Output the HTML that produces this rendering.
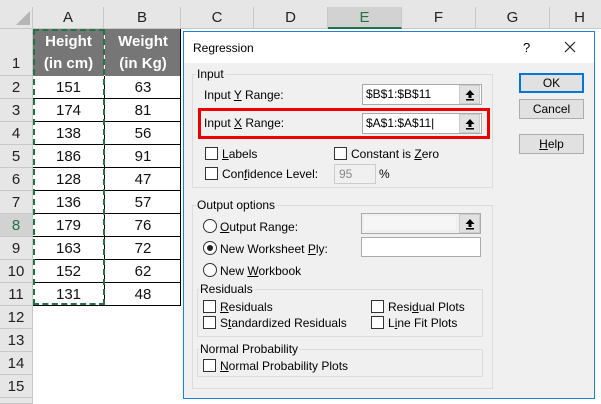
<!DOCTYPE html>
<html style="width:601px;height:404px;overflow:hidden"><head><meta charset="utf-8"><style>
*{margin:0;padding:0;box-sizing:border-box}
body{width:601px;height:404px;overflow:hidden;background:#fff;position:relative;font-family:"Liberation Sans",sans-serif}
.a{position:absolute}
.ch{position:absolute;top:7px;height:22px;background:#e6e6e6;border-right:1px solid #c8c8c8;border-bottom:1px solid #c8c8c8;font-size:15px;text-align:center;line-height:22px;color:#222}
.rh{position:absolute;left:0;width:33px;height:23px;background:#e6e6e6;border-bottom:1px solid #c8c8c8;border-right:1px solid #c8c8c8;font-size:15px;text-align:center;line-height:23px;color:#222}
.c{position:absolute;height:23px;font-size:15px;text-align:center;line-height:23px;color:#111;border-bottom:1px solid #000}
.d{font-size:12px;color:#000;position:absolute;white-space:nowrap}
.cb{position:absolute;width:13px;height:13px;border:1px solid #333;background:#fff}
.rb{position:absolute;width:14px;height:14px;border:1px solid #333;border-radius:50%;background:#fff}
.g{position:absolute;border:1px solid #dcdcdc}
.gl{position:absolute;background:#f0f0f0;padding:0 1px;font-size:12px;top:-8px;left:3px}
.tb{position:absolute;border:1px solid #aaa;background:#fff;font-size:12px;line-height:18px;padding-left:3px}
.btn{position:absolute;width:65px;height:20px;border:1px solid #adadad;background:#e1e1e1;font-size:12px;text-align:center;line-height:18px}
.up{position:absolute;width:21px;background:#e1e1e1;border:1px solid #ccc}
.up svg{position:absolute;left:4px;top:3px}
u{text-decoration:underline}
</style></head><body>
<div class="a" style="left:0;top:0;width:601px;height:7px;background:#e6e6e6"></div>
<div class="a" style="left:0;top:7px;width:33px;height:22px;background:#e6e6e6;border-right:1px solid #c8c8c8;border-bottom:1px solid #c8c8c8"></div>
<div class="a" style="left:16px;top:11px;width:0;height:0;border-left:14px solid transparent;border-bottom:14px solid #b5b5b5"></div>
<div class="ch" style="left:33px;width:71px">A</div>
<div class="ch" style="left:104px;width:77px">B</div>
<div class="ch" style="left:181px;width:73px">C</div>
<div class="ch" style="left:254px;width:74px">D</div>
<div class="ch" style="left:328px;width:74px;background:#d2d2d2;border-bottom:2px solid #217346;color:#217346">E</div>
<div class="ch" style="left:402px;width:74px">F</div>
<div class="ch" style="left:476px;width:74px">G</div>
<div class="ch" style="left:550px;width:60px">H</div>
<div class="rh" style="top:29px;height:47px;line-height:70px">1</div>
<div class="rh" style="top:76px">2</div><div class="rh" style="top:99px">3</div><div class="rh" style="top:122px">4</div><div class="rh" style="top:145px">5</div><div class="rh" style="top:168px">6</div><div class="rh" style="top:191px">7</div><div class="rh" style="top:214px;background:#d2d2d2;color:#217346">8</div><div class="rh" style="top:237px">9</div><div class="rh" style="top:260px">10</div><div class="rh" style="top:283px">11</div><div class="rh" style="top:306px">12</div><div class="rh" style="top:329px">13</div><div class="rh" style="top:352px">14</div><div class="rh" style="top:375px">15</div><div class="rh" style="top:398px;height:6px"></div>
<div class="a" style="left:33px;top:29px;width:148px;height:47px;background:#767676;color:#fff;font-weight:bold;font-size:15px;line-height:22px;padding-top:2px">
<div class="a" style="left:0;width:71px;text-align:center">Height<br>(in cm)</div>
<div class="a" style="left:71px;width:77px;text-align:center;border-left:1px solid #fff;height:47px;top:0;padding-top:2px">Weight<br>(in Kg)</div></div>
<div id="rows"></div>
<div class="a" style="left:180px;top:29px;width:1px;height:277px;background:#000"></div>
<script>
var A=[151,174,138,186,128,136,179,163,152,131],B=[63,81,56,91,47,57,76,72,62,48],h="";
for(var i=0;i<10;i++){var t=76+i*23;h+='<div class="c" style="left:33px;top:'+t+'px;width:71px">'+A[i]+'</div><div class="c" style="left:104px;top:'+t+'px;width:77px;border-left:1px solid #000">'+B[i]+'</div>';}
document.getElementById("rows").outerHTML=h;
</script>
<div class="a" style="left:33px;top:29px;width:72px;height:276px;border:2px dashed #217346"></div>
<!-- dialog -->
<div class="a" style="left:183px;top:31px;width:412px;height:368px;background:#f0f0f0;border:1px solid #1883d7">
<div class="a" style="left:0;top:0;width:410px;height:31px;background:#fff"></div>
<div class="d" style="left:9px;top:9px">Regression</div>
<div class="d" style="left:339px;top:8px;font-size:13px">?</div>
<svg class="a" style="left:380px;top:9px" width="12" height="12"><path d="M1 1L11 11M11 1L1 11" stroke="#222" stroke-width="1.2"/></svg>
<div class="g" style="left:8px;top:42px;width:301px;height:114px"><div class="gl">Input</div></div>
<div class="d" style="left:20px;top:56px">Input <u>Y</u> Range:</div>
<div class="tb" style="left:178px;top:52px;width:120px;height:21px">$B$1:$B$11</div>
<div class="up" style="left:275px;top:53px;height:19px"><svg width="12" height="12"><path d="M6 1L1.5 6H4.5V9H7.5V6H10.5Z" fill="#000"/><rect x="2" y="10" width="8" height="1.5" fill="#000"/></svg></div>
<div class="a" style="left:14px;top:76px;width:292px;height:31px;border:3px solid #e00"></div>
<div class="d" style="left:20px;top:84px">Input <u>X</u> Range:</div>
<div class="tb" style="left:178px;top:81px;width:120px;height:21px">$A$1:$A$11|</div>
<div class="up" style="left:275px;top:82px;height:19px"><svg width="12" height="12"><path d="M6 1L1.5 6H4.5V9H7.5V6H10.5Z" fill="#000"/><rect x="2" y="10" width="8" height="1.5" fill="#000"/></svg></div>
<div class="cb" style="left:21px;top:115px"></div><div class="d" style="left:38px;top:115px"><u>L</u>abels</div>
<div class="cb" style="left:150px;top:115px"></div><div class="d" style="left:167px;top:115px">Constant is <u>Z</u>ero</div>
<div class="cb" style="left:21px;top:135px"></div><div class="d" style="left:38px;top:135px">Con<u>f</u>idence Level:</div>
<div class="a" style="left:150px;top:132px;width:42px;height:20px;border:1px solid #ccc;background:#f0f0f0;font-size:12px;color:#888;padding:2px 4px">95</div>
<div class="d" style="left:195px;top:135px">%</div>
<div class="g" style="left:8px;top:173px;width:301px;height:184px"><div class="gl">Output options</div></div>
<div class="rb" style="left:19px;top:187px"></div><div class="d" style="left:36px;top:188px"><u>O</u>utput Range:</div>
<div class="tb" style="left:177px;top:181px;width:120px;height:21px;background:#f0f0f0"></div>
<div class="a" style="left:180px;top:184px;width:92px;height:14px;background:#f6f6f6"></div>
<div class="up" style="left:275px;top:182px;height:19px"><svg width="12" height="12"><path d="M6 1L1.5 6H4.5V9H7.5V6H10.5Z" fill="#000"/><rect x="2" y="10" width="8" height="1.5" fill="#000"/></svg></div>
<div class="rb" style="left:19px;top:209px"></div><div class="a" style="left:23px;top:213px;width:6px;height:6px;border-radius:50%;background:#222"></div>
<div class="d" style="left:36px;top:210px">New Worksheet <u>P</u>ly:</div>
<div class="tb" style="left:177px;top:205px;width:120px;height:20px"></div>
<div class="rb" style="left:19px;top:231px"></div><div class="d" style="left:36px;top:232px">New <u>W</u>orkbook</div>
<div class="g" style="left:13px;top:257px;width:286px;height:48px"><div class="gl" style="left:1px">Residuals</div></div>
<div class="cb" style="left:19px;top:268px"></div><div class="d" style="left:36px;top:268px"><u>R</u>esiduals</div>
<div class="cb" style="left:19px;top:284px"></div><div class="d" style="left:36px;top:284px">S<u>t</u>andardized Residuals</div>
<div class="cb" style="left:187px;top:268px"></div><div class="d" style="left:204px;top:268px">Resi<u>d</u>ual Plots</div>
<div class="cb" style="left:187px;top:284px"></div><div class="d" style="left:204px;top:284px">L<u>i</u>ne Fit Plots</div>
<div class="g" style="left:13px;top:317px;width:286px;height:28px"><div class="gl" style="left:1px">Normal Probability</div></div>
<div class="cb" style="left:19px;top:327px"></div><div class="d" style="left:36px;top:327px"><u>N</u>ormal Probability Plots</div>
<div class="btn" style="left:335px;top:41px;border:2px solid #0078d7;line-height:16px">OK</div>
<div class="btn" style="left:335px;top:67px">Cancel</div>
<div class="btn" style="left:335px;top:102px"><u>H</u>elp</div>
</div>
</body></html>
